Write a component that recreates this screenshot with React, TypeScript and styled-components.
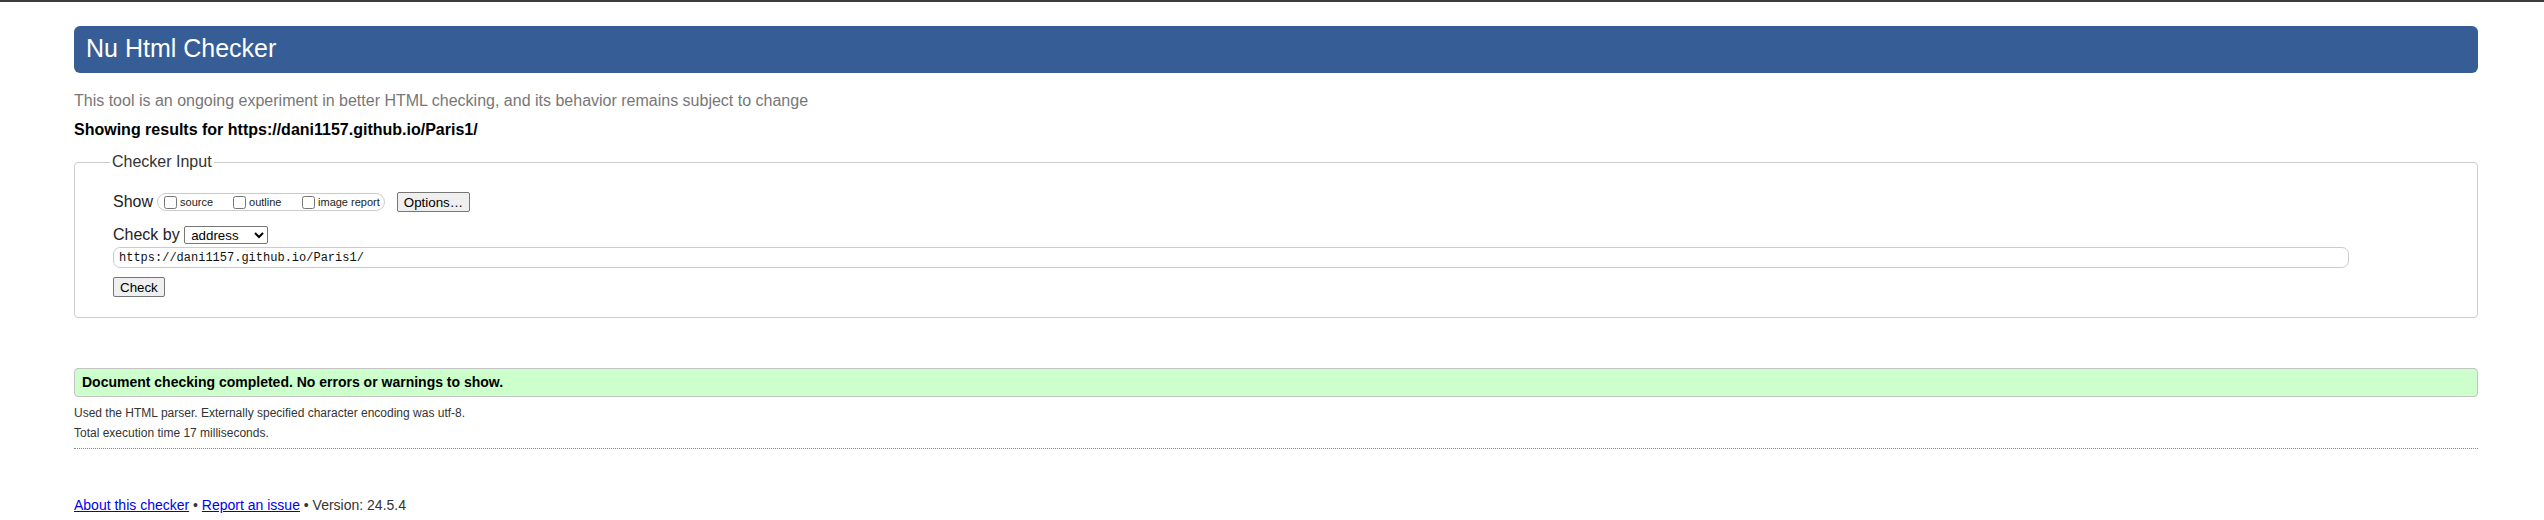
import React from "react";
import styled, { createGlobalStyle } from "styled-components";

const Global = createGlobalStyle`
  html, body { margin: 0; padding: 0; background: #fff; }
  body { font-family: Arial, "Liberation Sans", sans-serif; color: #222; }
`;

const TopBar = styled.div`
  height: 2px;
  background: #3c3c3c;
`;

const Page = styled.div`
  padding: 0 66px 0 74px;
`;

const Header = styled.h1`
  margin: 24px 0 0;
  padding: 8px 12px 10px;
  background: #365d95;
  color: #fff;
  font-size: 25px;
  font-weight: normal;
  line-height: 29px;
  border-radius: 6px;
`;

const Intro = styled.p`
  margin: 18px 0 0;
  font-size: 16px;
  line-height: 20px;
  color: #777;
`;

const Results = styled.p`
  margin: 9px 0 0;
  font-size: 16px;
  line-height: 20px;
  font-weight: bold;
  color: #000;
`;

const Fieldset = styled.fieldset`
  margin: 13px 0 0;
  padding: 21px 38px 20px 38px;
  border: 1px solid #ccc;
  border-radius: 4px;
  min-width: 0;
`;

const Legend = styled.legend`
  margin-left: -3px;
  padding: 0 2px;
  font-size: 16px;
  line-height: 18px;
  color: #333;
`;

const Row = styled.div<{ $top?: number }>`
  display: flex;
  align-items: center;
  margin-top: ${(p) => p.$top ?? 0}px;
`;

const RowLabel = styled.span<{ $lh: number }>`
  font-size: 16px;
  line-height: ${(p) => p.$lh}px;
  color: #222;
  white-space: pre;
`;

const CheckGroup = styled.div`
  display: inline-flex;
  align-items: center;
  box-sizing: border-box;
  height: 18px;
  margin-left: 4px;
  padding: 0 4px 0 2px;
  border: 1px solid #ccc;
  border-radius: 9px;
`;

const CheckItem = styled.label<{ $min?: number }>`
  display: inline-flex;
  align-items: center;
  min-width: ${(p) => p.$min ?? 0}px;
  font-size: 11px;
  line-height: 13px;
  color: #222;
`;

const Box = styled.input`
  width: 13px;
  height: 13px;
  margin: 0 3px 0 4px;
`;

const Button = styled.button<{ $left?: number }>`
  box-sizing: border-box;
  height: 20px;
  margin-left: ${(p) => p.$left ?? 0}px;
  padding: 0 6px;
  font-family: Arial, "Liberation Sans", sans-serif;
  font-size: 13.33px;
  color: #000;
  background: #efefef;
  border: 1px solid #767676;
  border-radius: 2px;
`;

const Select = styled.select`
  box-sizing: border-box;
  width: 84px;
  height: 18px;
  margin-left: 0;
  padding: 0 0 0 2px;
  font-family: Arial, "Liberation Sans", sans-serif;
  font-size: 13.33px;
  color: #000;
  background: #fff;
  border: 1px solid #767676;
  border-radius: 2px;
`;

const UrlInput = styled.input`
  display: block;
  box-sizing: border-box;
  width: 2236px;
  height: 21px;
  margin-top: 3px;
  padding: 0 5px;
  font-family: "Liberation Mono", "DejaVu Sans Mono", monospace;
  font-size: 12px;
  color: #111;
  border: 1px solid #ccc;
  border-radius: 7px;
  outline: none;
`;

const Success = styled.div`
  margin-top: 50px;
  padding: 5px 7px;
  background: #ccffcc;
  border: 1px solid #c4c4c4;
  border-radius: 4px;
  font-size: 14px;
  line-height: 17px;
  font-weight: bold;
  color: #000;
`;

const Details = styled.div`
  margin-top: 6px;
  font-size: 12px;
  line-height: 20px;
  color: #333;
`;

const Rule = styled.hr`
  margin: 5px 0 0;
  height: 0;
  border: 0;
  border-top: 1px dotted #888;
`;

const Footer = styled.p`
  margin: 48px 0 0;
  font-size: 14px;
  line-height: 17px;
  color: #333;
`;

const Link = styled.a`
  color: #0000ee;
  text-decoration: underline;
`;

export default function App() {
  return (
    <>
      <Global />
      <TopBar />
      <Page>
        <Header>Nu Html Checker</Header>
        <Intro>
          This tool is an ongoing experiment in better HTML checking, and its behavior remains subject to change
        </Intro>
        <Results>Showing results for https://dani1157.github.io/Paris1/</Results>
        <Fieldset>
          <Legend>Checker Input</Legend>
          <Row>
            <RowLabel $lh={20}>Show</RowLabel>
            <CheckGroup>
              <CheckItem $min={69}>
                <Box type="checkbox" />
                source
              </CheckItem>
              <CheckItem $min={69}>
                <Box type="checkbox" />
                outline
              </CheckItem>
              <CheckItem>
                <Box type="checkbox" />
                image report
              </CheckItem>
            </CheckGroup>
            <Button $left={12}>Options…</Button>
          </Row>
          <Row $top={14}>
            <RowLabel $lh={18}>Check by </RowLabel>
            <Select defaultValue="address">
              <option value="address">address</option>
              <option value="file">file upload</option>
              <option value="text">text input</option>
            </Select>
          </Row>
          <UrlInput type="url" defaultValue="https://dani1157.github.io/Paris1/" />
          <Row $top={9}>
            <Button>Check</Button>
          </Row>
        </Fieldset>
        <Success>Document checking completed. No errors or warnings to show.</Success>
        <Details>
          <div>Used the HTML parser. Externally specified character encoding was utf-8.</div>
          <div>Total execution time 17 milliseconds.</div>
        </Details>
        <Rule />
        <Footer>
          <Link href="#">About this checker</Link> • <Link href="#">Report an issue</Link> • Version: 24.5.4
        </Footer>
      </Page>
    </>
  );
}
